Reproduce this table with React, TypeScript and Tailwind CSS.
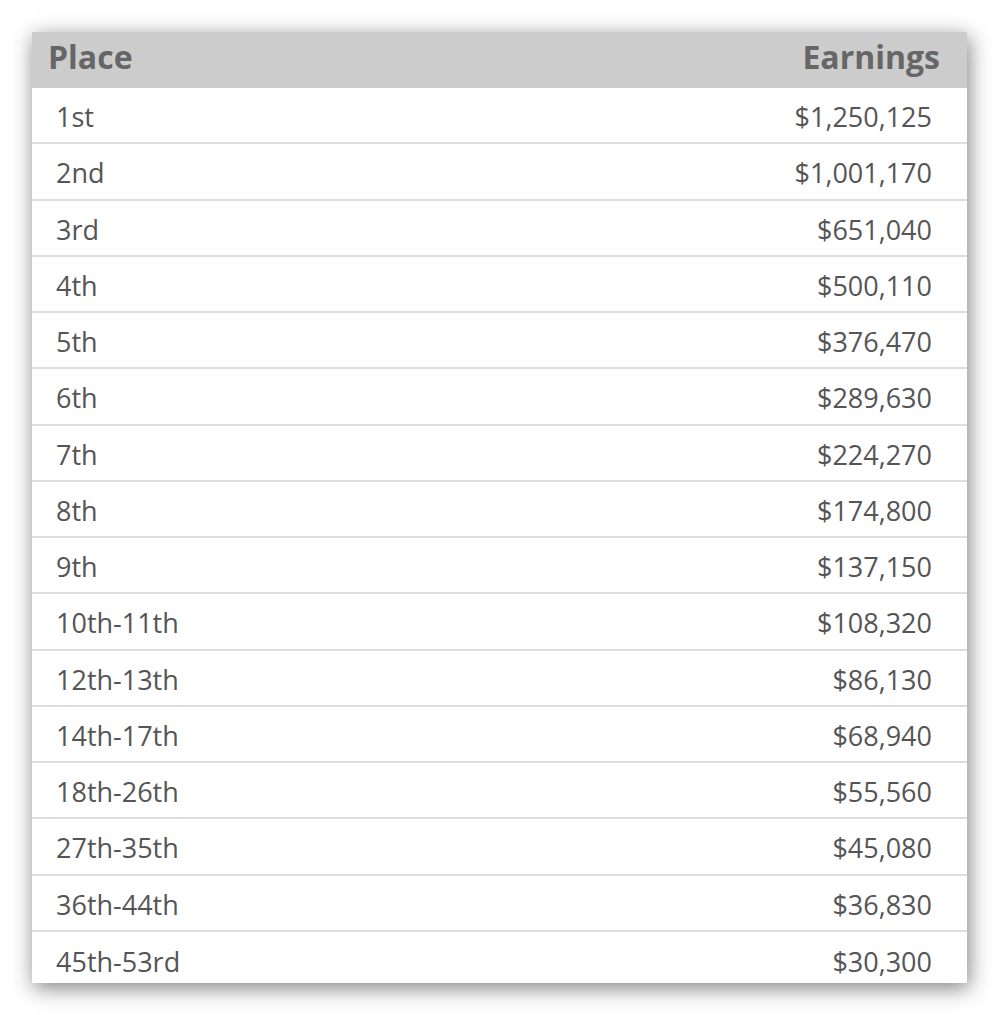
import React from "react";

const rows: [string, string][] = [
  ["1st", "$1,250,125"],
  ["2nd", "$1,001,170"],
  ["3rd", "$651,040"],
  ["4th", "$500,110"],
  ["5th", "$376,470"],
  ["6th", "$289,630"],
  ["7th", "$224,270"],
  ["8th", "$174,800"],
  ["9th", "$137,150"],
  ["10th-11th", "$108,320"],
  ["12th-13th", "$86,130"],
  ["14th-17th", "$68,940"],
  ["18th-26th", "$55,560"],
  ["27th-35th", "$45,080"],
  ["36th-44th", "$36,830"],
  ["45th-53rd", "$30,300"],
];

export default function App() {
  return (
    <div
      className="w-[999px] h-[1015px] bg-white pt-[32px] pl-[32px]"
      style={{ fontFamily: '"Open Sans", "Liberation Sans", sans-serif' }}
    >
      <div className="w-[935px] h-[951px] overflow-hidden bg-white shadow-[2px_5px_20px_rgba(0,0,0,0.5)]">
        <div className="h-[56px] bg-[#cccccc] flex items-center justify-between pl-[16px] pr-[27px] pb-[7px] text-[32px] leading-none font-bold text-[#666666]">
          <span>Place</span>
          <span>Earnings</span>
        </div>
        {rows.map(([p, e], i) => (
          <div
            key={p}
            className={`h-[56.25px] flex items-center justify-between pl-[24px] pr-[35px] pt-[3px] text-[27px] leading-none text-[#555555] ${
              i < rows.length - 1 ? "border-b-2 border-[#dddddd]" : ""
            }`}
          >
            <span>{p}</span>
            <span>{e}</span>
          </div>
        ))}
      </div>
    </div>
  );
}
